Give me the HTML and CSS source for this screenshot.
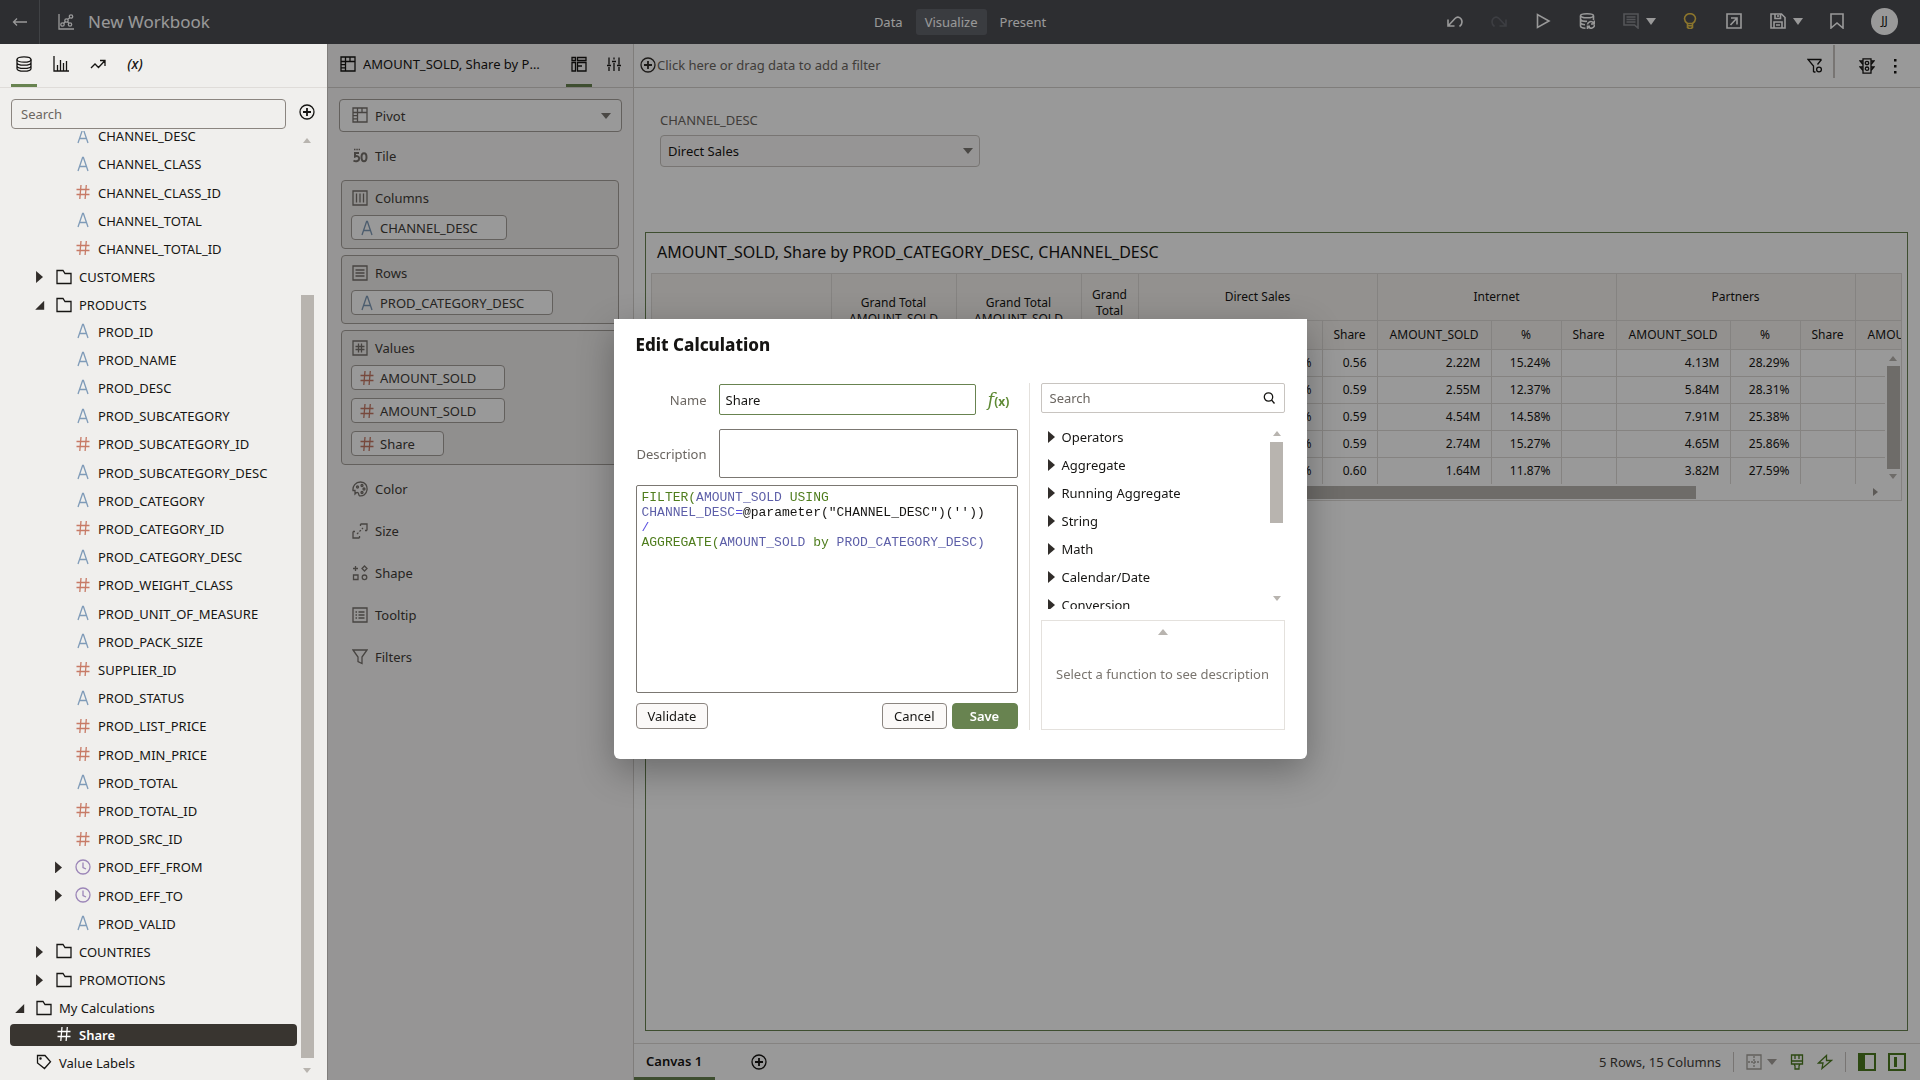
FILE: index.html
```
<!DOCTYPE html>
<html lang="en">

<head>
    <meta charset="UTF-8">
    <meta name="viewport" content="width=device-width, initial-scale=1.0">
    <title>New Workbook</title>
    <link rel="stylesheet" href="styles.css">
</head>

<body>
    <!-- Icon sprite -->
    <svg class="sprite" aria-hidden="true">
        <symbol id="i-back" viewBox="0 0 16 16"><path d="M15 8H1.500M5 4.500L1.500 8L5 11.500"/></symbol>
        <symbol id="i-chart" viewBox="0 0 16 16"><path d="M1 0v15h15"/><circle cx="4.500" cy="10.500" r="1.700"/><circle cx="8.500" cy="6.500" r="1.700"/><circle cx="13" cy="2.500" r="1.700"/><circle cx="12" cy="10.500" r="1.700"/><path d="M5.700 9.300l1.600-1.600M9.700 5.300l2-1.600M9.500 7.800l1.400 1.500"/></symbol>
        <symbol id="i-undo" viewBox="0 0 16 16"><path d="M1 6.500V13h6.500M1.500 12.500L8 5.500C11 2.500 15 5 15 9c0 2-1 3.500-2.500 4.500"/></symbol>
        <symbol id="i-redo" viewBox="0 0 16 16"><path d="M15 6.500V13H8.500M14.500 12.500L8 5.500C5 2.500 1 5 1 9c0 2 1 3.500 2.500 4.500"/></symbol>
        <symbol id="i-play" viewBox="0 0 16 16"><path d="M2.500 1.500v13L14 8z"/></symbol>
        <symbol id="i-dbrefresh" viewBox="0 0 16 16"><ellipse cx="8" cy="2.800" rx="6.500" ry="2"/><path d="M1.500 3v10c0 1 2 2 5 2.200M14.500 3v4M1.500 6.500c1 1.500 4 2 6.500 1.800M1.500 10c.8 1 2.500 1.700 4.500 1.800M8.500 11.500a3.300 3.300 0 0 1 6-1.500M15.500 12a3.300 3.300 0 0 1-6 1.800M15.300 7.500V11H12M8.500 16v-2.800h2.500"/></symbol>
        <symbol id="i-comment" viewBox="0 0 16 16"><path d="M1 1h14v14l-3.500-3H1zM3.500 4h9M3.500 6.500h9M3.500 9h9"/></symbol>
        <symbol id="i-bulb" viewBox="0 0 16 16"><path d="M5.500 10.500C3.500 9 2.500 7.500 2.500 5.700a5.500 5 0 0 1 11 0c0 1.800-1 3.300-3 4.800zM5.500 10.500v4l1.500 1h2l1.500-1v-4M5.500 12.800h5"/></symbol>
        <symbol id="i-export" viewBox="0 0 16 16"><path d="M1 1h14v14H1zM5 5h6v6.500M11 5l-6.500 7"/></symbol>
        <symbol id="i-save" viewBox="0 0 16 16"><path d="M1 1h10.500L15 4.500V15H1zM4 15V9h8v6M5 1v4.500h5.500V1M8 2v2M6 12h4"/></symbol>
        <symbol id="i-bookmark" viewBox="0 0 16 16"><path d="M2 1h12v14l-6-5l-6 5z"/></symbol>
        <symbol id="i-db" viewBox="0 0 16 16"><ellipse cx="8" cy="3.500" rx="7" ry="2.700"/><path d="M1 3.500v9c0 1.700 3 2.700 7 2.700s7-1 7-2.700v-9M1 6.500c0 1.700 3 2.700 7 2.700s7-1 7-2.700M1 9.700c0 1.700 3 2.700 7 2.700s7-1 7-2.700"/></symbol>
        <symbol id="i-bars" viewBox="0 0 16 16"><path d="M1 0v15h15M4.500 15V9M7.500 15V4M10.500 15V7M13.500 15V5"/></symbol>
        <symbol id="i-trend" viewBox="0 0 16 16"><path d="M1 12l4-4 3.500 3.500L15 4.500M10 4.500h5V10"/></symbol>
        <symbol id="i-plus" viewBox="0 0 16 16"><circle cx="8" cy="8" r="7"/><path d="M8 4v8M4 8h8" stroke-width="1.800"/></symbol>
        <symbol id="i-alpha" viewBox="0 0 16 16"><path d="M3 15L7.600 1.500h.8L13 15M4.800 10.500h6.400"/></symbol>
        <symbol id="i-hash" viewBox="0 0 16 16"><path d="M6 1L4.800 15M11.300 1L10.100 15M1.500 5.500h13M1.500 10.500h13"/></symbol>
        <symbol id="i-clock" viewBox="0 0 16 16"><circle cx="8" cy="8" r="7"/><path d="M8 3.500v5l3 1.500"/></symbol>
        <symbol id="i-folder" viewBox="0 0 16 16"><path d="M1 1.500h6l2 3h6v10H1z"/></symbol>
        <symbol id="i-tag" viewBox="0 0 16 16"><path d="M1.500 1.500H9l5.500 6.300L8.500 14.500L1.500 9z"/><circle cx="4.500" cy="4.500" r=".6"/></symbol>
        <symbol id="i-pivot" viewBox="0 0 16 16"><path d="M1 1h14v14H1zM1 5.500h14M5.500 1v14M10 1v4.500M1 8.700h4.500M1 11.800h4.500"/></symbol>
        <symbol id="i-grammar" viewBox="0 0 16 16"><path d="M1 1.500h3.500v3H1zM6.500 1.500H15v3H6.500zM1 6.500h3.500V15H1zM6.500 6.500H15V15H6.500zM6.500 10H11"/></symbol>
        <symbol id="i-sliders" viewBox="0 0 16 16"><path d="M3 1.500v7M3 11v4M8 1.500v2M8 7v8M13 1.500v7M13 11v4M1 9.500h4M6 5.500h4M11 9.500h4"/></symbol>
        <symbol id="i-tile" viewBox="0 0 16 16"><path d="M2 1.500h6" stroke-dasharray="1.500 .8"/><path d="M7 5H3v3.500c2-1 4.200-.2 4.200 2C7.200 13 4 14 1.500 12.500" stroke-width="2"/><ellipse cx="12" cy="9.300" rx="2.500" ry="4" stroke-width="2"/></symbol>
        <symbol id="i-cols" viewBox="0 0 16 16"><path d="M1 1h14v14H1zM4.500 3.500v9M8 3.500v9M11.500 3.500v9"/></symbol>
        <symbol id="i-rows" viewBox="0 0 16 16"><path d="M1 1h14v14H1zM3.500 5h9M3.500 8h9M3.500 11h9"/></symbol>
        <symbol id="i-values" viewBox="0 0 16 16"><path d="M1 1h14v14H1zM6.500 3.500v9M9.500 3.500v9M3.500 6.500h9M3.500 9.500h9"/></symbol>
        <symbol id="i-color" viewBox="0 0 16 16"><path d="M3 13V9.500H1C.5 5 3.500 1 8.500 1S15.500 5 15 9s-4 6.500-7.500 5.800c-1-.3-.5-2-1.500-3S4 12 3 13z"/><circle cx="5.500" cy="6" r="1"/><circle cx="10" cy="4.500" r="1"/><circle cx="12" cy="8" r="1"/><circle cx="10" cy="11.500" r="1"/></symbol>
        <symbol id="i-size" viewBox="0 0 16 16"><path d="M8.500 1H15v6.500M1 8.500V15h6.500M1 8.500h2M7.500 15v-2M8.500 1v2M15 7.500h-2"/><path d="M5 11l6-6" stroke-dasharray="2 1.500"/></symbol>
        <symbol id="i-shape" viewBox="0 0 16 16"><path d="M3.500 1v5M1 3.500h5M12.500 1L15 3.500 12.500 6 10 3.500zM1.500 10h4.500v4.500H1.500z"/><circle cx="12.500" cy="12.300" r="2.300"/></symbol>
        <symbol id="i-tooltip" viewBox="0 0 16 16"><path d="M1 1h14v14H1zM3.500 5H5M6.500 5h6M3.500 8H5M6.500 8h6M3.500 11H5M6.500 11h6"/></symbol>
        <symbol id="i-filter" viewBox="0 0 16 16"><path d="M1 1h14L10 8v6.500l-4-2V8z"/></symbol>
        <symbol id="i-filtergear" viewBox="0 0 16 16"><path d="M14.500 1.500H1L6.500 8v6M14.500 1.500L10.500 6.500M6.500 14h2"/><circle cx="12" cy="11.500" r="2.400"/></symbol>
        <symbol id="i-traffic" viewBox="0 0 16 16"><path d="M4 .800h8v14.400H4zM4 3H1l3 3.500M12 3h3l-3 3.500M4 9H1l3 3.500M12 9h3l-3 3.500"/><circle cx="8" cy="5" r="1.700"/><circle cx="8" cy="10.700" r="1.700"/></symbol>
        <symbol id="i-kebab" viewBox="0 0 16 16"><path d="M7 1h2.500v2.500H7zM7 7h2.500v2.500H7zM7 13h2.500v2.500H7z" fill="currentColor" stroke="none"/></symbol>
        <symbol id="i-grid" viewBox="0 0 16 16"><path d="M1 1h14v14H1z"/><path d="M8 2v12M2 8h12" stroke-dasharray="2 1"/></symbol>
        <symbol id="i-brush" viewBox="0 0 16 16"><path d="M2.500 1h11v9h-11zM2.500 7h11M6 1v4M10 1v4M5 10l1 2v3h4v-3l1-2"/></symbol>
        <symbol id="i-bolt" viewBox="0 0 16 16"><path d="M9.500 1.500L1.500 9h4.500L5 14.500L14.500 6.500H9.500z"/></symbol>
        <symbol id="i-paneleft" viewBox="0 0 18 18"><path d="M1 1h16v16H1z"/><path d="M1 1h6v16H1z" fill="currentColor" stroke="none"/></symbol>
        <symbol id="i-panemid" viewBox="0 0 18 18"><path d="M1 1h16v16H1z"/><path d="M6 4h3v10H6z" fill="currentColor" stroke="none"/></symbol>
        <symbol id="i-search" viewBox="0 0 16 16"><circle cx="7.500" cy="7" r="4.200"/><path d="M10.500 10l3 3.500"/></symbol>
    </svg>

    <div class="app">
        <!-- Header -->
        <header class="header">
            <div class="header-left">
                <button class="back" aria-label="Back"><svg class="icon"><use href="#i-back"/></svg></button>
                <svg class="icon"><use href="#i-chart"/></svg>
                <h1 class="title">New Workbook</h1>
            </div>
            <nav class="modes">
                <a href="#data">Data</a>
                <a href="#visualize" class="active">Visualize</a>
                <a href="#present">Present</a>
            </nav>
            <div class="header-tools">
                <button aria-label="Undo"><svg class="icon"><use href="#i-undo"/></svg></button>
                <button aria-label="Redo" class="faint"><svg class="icon"><use href="#i-redo"/></svg></button>
                <button aria-label="Preview"><svg class="icon"><use href="#i-play"/></svg></button>
                <button aria-label="Refresh data"><svg class="icon"><use href="#i-dbrefresh"/></svg></button>
                <button aria-label="Comments" class="with-caret"><svg class="icon muted"><use href="#i-comment"/></svg><span class="caret"></span></button>
                <button aria-label="Insights" class="yellow"><svg class="icon"><use href="#i-bulb"/></svg></button>
                <button aria-label="Export"><svg class="icon"><use href="#i-export"/></svg></button>
                <button aria-label="Save" class="with-caret"><svg class="icon"><use href="#i-save"/></svg><span class="caret"></span></button>
                <button aria-label="Bookmark"><svg class="icon"><use href="#i-bookmark"/></svg></button>
                <button class="avatar">JJ</button>
            </div>
        </header>

        <div class="workspace">
            <!-- Data panel -->
            <aside class="data-panel">
                <div class="panel-tabs">
                    <button class="tab active" aria-label="Data"><svg class="icon"><use href="#i-db"/></svg></button>
                    <button class="tab" aria-label="Visualizations"><svg class="icon"><use href="#i-bars"/></svg></button>
                    <button class="tab" aria-label="Analytics"><svg class="icon"><use href="#i-trend"/></svg></button>
                    <button class="tab param" aria-label="Parameters">(x)</button>
                </div>
                <div class="data-search">
                    <input type="text" placeholder="Search" aria-label="Search data">
                    <button aria-label="Add"><svg class="icon"><use href="#i-plus"/></svg></button>
                </div>
                <div class="tree-area">
                    <ul class="tree">
                        <li class="l2 text"><svg class="icon"><use href="#i-alpha"/></svg>CHANNEL_DESC</li>
                        <li class="l2 text"><svg class="icon"><use href="#i-alpha"/></svg>CHANNEL_CLASS</li>
                        <li class="l2 num"><svg class="icon"><use href="#i-hash"/></svg>CHANNEL_CLASS_ID</li>
                        <li class="l2 text"><svg class="icon"><use href="#i-alpha"/></svg>CHANNEL_TOTAL</li>
                        <li class="l2 num"><svg class="icon"><use href="#i-hash"/></svg>CHANNEL_TOTAL_ID</li>
                        <li class="l1 closed"><svg class="icon"><use href="#i-folder"/></svg>CUSTOMERS</li>
                        <li class="l1 open"><svg class="icon"><use href="#i-folder"/></svg>PRODUCTS</li>
                        <li class="l2 text first"><svg class="icon"><use href="#i-alpha"/></svg>PROD_ID</li>
                        <li class="l2 text"><svg class="icon"><use href="#i-alpha"/></svg>PROD_NAME</li>
                        <li class="l2 text"><svg class="icon"><use href="#i-alpha"/></svg>PROD_DESC</li>
                        <li class="l2 text"><svg class="icon"><use href="#i-alpha"/></svg>PROD_SUBCATEGORY</li>
                        <li class="l2 num"><svg class="icon"><use href="#i-hash"/></svg>PROD_SUBCATEGORY_ID</li>
                        <li class="l2 text"><svg class="icon"><use href="#i-alpha"/></svg>PROD_SUBCATEGORY_DESC</li>
                        <li class="l2 text"><svg class="icon"><use href="#i-alpha"/></svg>PROD_CATEGORY</li>
                        <li class="l2 num"><svg class="icon"><use href="#i-hash"/></svg>PROD_CATEGORY_ID</li>
                        <li class="l2 text"><svg class="icon"><use href="#i-alpha"/></svg>PROD_CATEGORY_DESC</li>
                        <li class="l2 num"><svg class="icon"><use href="#i-hash"/></svg>PROD_WEIGHT_CLASS</li>
                        <li class="l2 text"><svg class="icon"><use href="#i-alpha"/></svg>PROD_UNIT_OF_MEASURE</li>
                        <li class="l2 text"><svg class="icon"><use href="#i-alpha"/></svg>PROD_PACK_SIZE</li>
                        <li class="l2 num"><svg class="icon"><use href="#i-hash"/></svg>SUPPLIER_ID</li>
                        <li class="l2 text"><svg class="icon"><use href="#i-alpha"/></svg>PROD_STATUS</li>
                        <li class="l2 num"><svg class="icon"><use href="#i-hash"/></svg>PROD_LIST_PRICE</li>
                        <li class="l2 num"><svg class="icon"><use href="#i-hash"/></svg>PROD_MIN_PRICE</li>
                        <li class="l2 text"><svg class="icon"><use href="#i-alpha"/></svg>PROD_TOTAL</li>
                        <li class="l2 num"><svg class="icon"><use href="#i-hash"/></svg>PROD_TOTAL_ID</li>
                        <li class="l2 num"><svg class="icon"><use href="#i-hash"/></svg>PROD_SRC_ID</li>
                        <li class="l2 date closed"><svg class="icon"><use href="#i-clock"/></svg>PROD_EFF_FROM</li>
                        <li class="l2 date closed"><svg class="icon"><use href="#i-clock"/></svg>PROD_EFF_TO</li>
                        <li class="l2 text"><svg class="icon"><use href="#i-alpha"/></svg>PROD_VALID</li>
                        <li class="l1 closed"><svg class="icon"><use href="#i-folder"/></svg>COUNTRIES</li>
                        <li class="l1 closed"><svg class="icon"><use href="#i-folder"/></svg>PROMOTIONS</li>
                        <li class="l0 open"><svg class="icon"><use href="#i-folder"/></svg>My Calculations</li>
                        <li class="l1 selected first"><svg class="icon"><use href="#i-hash"/></svg>Share</li>
                        <li class="l0"><svg class="icon"><use href="#i-tag"/></svg>Value Labels</li>
                    </ul>
                    <div class="scrollbar tree-scroll">
                        <span class="arrow-up"></span>
                        <span class="thumb"></span>
                        <span class="arrow-down"></span>
                    </div>
                </div>
            </aside>

            <!-- Grammar panel -->
            <section class="grammar-panel">
                <div class="grammar-head">
                    <svg class="icon"><use href="#i-pivot"/></svg>
                    <h2>AMOUNT_SOLD, Share by PROD_CATEGORY_DESC</h2>
                    <button class="tab active" aria-label="Grammar"><svg class="icon"><use href="#i-grammar"/></svg></button>
                    <button class="tab" aria-label="Properties"><svg class="icon"><use href="#i-sliders"/></svg></button>
                </div>
                <div class="grammar-body">
                    <div class="viz-type">
                        <svg class="icon"><use href="#i-pivot"/></svg>
                        <select aria-label="Visualization type"><option>Pivot</option></select>
                        <span class="caret"></span>
                    </div>
                    <div class="drop-row"><svg class="icon"><use href="#i-tile"/></svg>Tile</div>
                    <div class="zones">
                        <div class="zone">
                            <h3><svg class="icon"><use href="#i-cols"/></svg>Columns</h3>
                            <button class="chip text"><svg class="icon"><use href="#i-alpha"/></svg><span>CHANNEL_DESC</span></button>
                        </div>
                        <div class="zone">
                            <h3><svg class="icon"><use href="#i-rows"/></svg>Rows</h3>
                            <button class="chip text"><svg class="icon"><use href="#i-alpha"/></svg><span>PROD_CATEGORY_DESC</span></button>
                        </div>
                        <div class="zone">
                            <h3><svg class="icon"><use href="#i-values"/></svg>Values</h3>
                            <button class="chip num"><svg class="icon"><use href="#i-hash"/></svg><span>AMOUNT_SOLD</span></button>
                            <button class="chip num"><svg class="icon"><use href="#i-hash"/></svg><span>AMOUNT_SOLD</span></button>
                            <button class="chip num"><svg class="icon"><use href="#i-hash"/></svg><span>Share</span></button>
                        </div>
                    </div>
                    <div class="drop-row"><svg class="icon"><use href="#i-color"/></svg>Color</div>
                    <div class="drop-row"><svg class="icon"><use href="#i-size"/></svg>Size</div>
                    <div class="drop-row"><svg class="icon"><use href="#i-shape"/></svg>Shape</div>
                    <div class="drop-row"><svg class="icon"><use href="#i-tooltip"/></svg>Tooltip</div>
                    <div class="drop-row"><svg class="icon"><use href="#i-filter"/></svg>Filters</div>
                </div>
            </section>

            <!-- Canvas -->
            <main class="canvas">
                <div class="filter-bar">
                    <button class="add-filter"><svg class="icon"><use href="#i-plus"/></svg>Click here or drag data to add a filter</button>
                    <div class="filter-tools">
                        <button aria-label="Filter options"><svg class="icon"><use href="#i-filtergear"/></svg></button>
                        <span class="divider"></span>
                        <button aria-label="Auto apply"><svg class="icon"><use href="#i-traffic"/></svg></button>
                        <button aria-label="More"><svg class="icon"><use href="#i-kebab"/></svg></button>
                    </div>
                </div>

                <div class="dashboard-filter">
                    <label for="channel">CHANNEL_DESC</label>
                    <div class="select-wrap">
                        <select id="channel"><option>Direct Sales</option></select>
                        <span class="caret"></span>
                    </div>
                </div>

                <section class="viz">
                    <h2>AMOUNT_SOLD, Share by PROD_CATEGORY_DESC, CHANNEL_DESC</h2>
                    <div class="pivot">
                        <div class="pivot-view">
                            <table>
                                <colgroup>
                                    <col class="c-label"><col class="c-total"><col class="c-total"><col class="c-gshare">
                                    <col class="c-amount"><col class="c-pct"><col class="c-share">
                                    <col class="c-amount"><col class="c-pct"><col class="c-share">
                                    <col class="c-amount"><col class="c-pct"><col class="c-share">
                                    <col class="c-amount">
                                </colgroup>
                                <thead>
                                    <tr class="groups">
                                        <td rowspan="2"></td>
                                        <th rowspan="2">Grand Total AMOUNT_SOLD</th>
                                        <th rowspan="2">Grand Total AMOUNT_SOLD</th>
                                        <th rowspan="2">Grand Total Share</th>
                                        <th colspan="3">Direct Sales</th>
                                        <th colspan="3">Internet</th>
                                        <th colspan="3">Partners</th>
                                        <th></th>
                                    </tr>
                                    <tr>
                                        <th>AMOUNT_SOLD</th><th>%</th><th>Share</th>
                                        <th>AMOUNT_SOLD</th><th>%</th><th>Share</th>
                                        <th>AMOUNT_SOLD</th><th>%</th><th>Share</th>
                                        <th>AMOUNT_SOLD</th>
                                    </tr>
                                </thead>
                                <tbody>
                                    <tr><td></td><td></td><td></td><td></td><td></td><td>56.47%</td><td>0.56</td><td>2.22M</td><td>15.24%</td><td></td><td>4.13M</td><td>28.29%</td><td></td><td></td></tr>
                                    <tr><td></td><td></td><td></td><td></td><td></td><td>59.32%</td><td>0.59</td><td>2.55M</td><td>12.37%</td><td></td><td>5.84M</td><td>28.31%</td><td></td><td></td></tr>
                                    <tr><td></td><td></td><td></td><td></td><td></td><td>59.04%</td><td>0.59</td><td>4.54M</td><td>14.58%</td><td></td><td>7.91M</td><td>25.38%</td><td></td><td></td></tr>
                                    <tr><td></td><td></td><td></td><td></td><td></td><td>58.87%</td><td>0.59</td><td>2.74M</td><td>15.27%</td><td></td><td>4.65M</td><td>25.86%</td><td></td><td></td></tr>
                                    <tr><td></td><td></td><td></td><td></td><td></td><td>60.05%</td><td>0.60</td><td>1.64M</td><td>11.87%</td><td></td><td>3.82M</td><td>27.59%</td><td></td><td></td></tr>
                                </tbody>
                            </table>
                            <div class="scrollbar pivot-scroll">
                                <span class="arrow-up"></span>
                                <span class="thumb"></span>
                                <span class="arrow-down"></span>
                            </div>
                        </div>
                        <div class="h-scroll">
                            <span class="thumb"></span>
                            <span class="arrow-right"></span>
                        </div>
                    </div>
                </section>

                <footer class="canvas-bar">
                    <button class="canvas-tab">Canvas 1</button>
                    <button class="add-canvas" aria-label="Add canvas"><svg class="icon"><use href="#i-plus"/></svg></button>
                    <div class="status">
                        <span>5 Rows, 15 Columns</span>
                        <span class="bar"></span>
                        <button class="grid-btn" aria-label="Grid"><svg class="icon"><use href="#i-grid"/></svg><span class="caret"></span></button>
                        <button aria-label="Brushing"><svg class="icon"><use href="#i-brush"/></svg></button>
                        <button aria-label="Auto insights"><svg class="icon"><use href="#i-bolt"/></svg></button>
                        <span class="bar"></span>
                        <button aria-label="Data panel"><svg class="icon big"><use href="#i-paneleft"/></svg></button>
                        <button aria-label="Grammar panel"><svg class="icon big"><use href="#i-panemid"/></svg></button>
                    </div>
                </footer>
            </main>
        </div>
    </div>

    <!-- Edit Calculation dialog -->
    <div class="backdrop"></div>
    <div class="dialog-layer">
        <form class="dialog" role="dialog" aria-labelledby="dialogTitle">
            <h2 id="dialogTitle">Edit Calculation</h2>
            <div class="dialog-body">
                <div class="calc">
                    <div class="field">
                        <label for="calcName">Name</label>
                        <input id="calcName" type="text" value="Share">
                        <button type="button" class="fx" aria-label="Functions"><i>f</i><b>(x)</b></button>
                    </div>
                    <div class="field">
                        <label for="calcDesc">Description</label>
                        <textarea id="calcDesc"></textarea>
                    </div>
                    <div class="editor" role="textbox" aria-multiline="true" aria-label="Expression" contenteditable="true" spellcheck="false"><span class="kw">FILTER(</span><span class="col">AMOUNT_SOLD</span> <span class="kw">USING</span>
<span class="col">CHANNEL_DESC</span><span class="op">=</span>@parameter("CHANNEL_DESC")(''))
<span class="op">/</span>
<span class="kw">AGGREGATE(</span><span class="col">AMOUNT_SOLD</span> <span class="kw">by</span> <span class="col">PROD_CATEGORY_DESC)</span></div>
                    <div class="actions">
                        <button type="button">Validate</button>
                        <button type="button" class="push">Cancel</button>
                        <button type="button" class="primary">Save</button>
                    </div>
                </div>
                <div class="functions">
                    <div class="fn-search">
                        <input type="text" placeholder="Search" aria-label="Search functions">
                        <svg class="icon"><use href="#i-search"/></svg>
                    </div>
                    <div class="fn-area">
                        <ul class="fn-list">
                            <li>Operators</li>
                            <li>Aggregate</li>
                            <li>Running Aggregate</li>
                            <li>String</li>
                            <li>Math</li>
                            <li>Calendar/Date</li>
                            <li>Conversion</li>
                        </ul>
                        <div class="scrollbar fn-scroll">
                            <span class="arrow-up"></span>
                            <span class="thumb"></span>
                            <span class="arrow-down"></span>
                        </div>
                    </div>
                    <div class="fn-desc">
                        <span class="arrow-up"></span>
                        <p>Select a function to see description</p>
                    </div>
                </div>
            </div>
        </form>
    </div>
</body>

</html>
```
FILE: styles.css
```
/* General */
* {
    box-sizing: border-box;
}

body {
    margin: 0;
    font-family: 'Noto Sans', 'Open Sans', sans-serif;
    font-size: 13px;
    line-height: 18px;
    color: #161513;
    overflow: hidden;
}

h1, h2, h3, ul, p {
    margin: 0;
    padding: 0;
    font-weight: 400;
}

ul {
    list-style: none;
}

button, input, select, textarea {
    font: inherit;
    color: inherit;
    margin: 0;
}

button {
    background: none;
    border: none;
    padding: 0;
    cursor: pointer;
}

select {
    appearance: none;
    background: none;
    border: none;
    outline: none;
    padding: 0;
    width: 100%;
}

.sprite {
    display: none;
}

.icon {
    width: 16px;
    height: 16px;
    flex: none;
    display: block;
    fill: none;
    stroke: currentColor;
    stroke-width: 1.3;
}

.icon.big {
    width: 18px;
    height: 18px;
    stroke-width: 2;
}

.caret {
    flex: none;
    border: 5px solid transparent;
    border-top: 6px solid currentColor;
    border-bottom: none;
}

.app {
    display: flex;
    flex-direction: column;
    height: 100vh;
}

/* Header */
.header {
    display: grid;
    grid-template-columns: 1fr auto 1fr;
    align-items: center;
    height: 44px;
    flex: none;
    background: #4b4d53;
    color: #fff;
}

.header-left {
    display: flex;
    align-items: center;
    height: 44px;
}

.back {
    width: 40px;
    height: 44px;
    padding: 0 12px;
    margin-right: 18px;
    border-right: 1px solid #6c6e74;
}

.title {
    margin-left: 14px;
    font-size: 17px;
    line-height: 24px;
}

.modes {
    display: flex;
    gap: 4px;
}

.modes a {
    padding: 4px 9px;
    border-radius: 3px;
    color: #fff;
    text-decoration: none;
}

.modes .active {
    background: #62646b;
}

.header-tools {
    display: flex;
    justify-content: flex-end;
    align-items: center;
    gap: 28px;
    padding: 0 22px 2px 0;
}

.header-tools .icon {
    stroke-width: 1.6;
}

.header-tools .caret {
    border-top-width: 7px;
}

.with-caret {
    display: flex;
    align-items: center;
    gap: 7px;
    margin-right: -2px;
}

.faint {
    color: #66686f;
}

.muted {
    color: #8d8e93;
}

.yellow {
    color: #e8c34a;
}

.avatar {
    width: 27px;
    height: 27px;
    margin-left: -2px;
    border-radius: 50%;
    background: #fff;
    color: #161513;
    font-size: 12px;
}

/* Columns of the page */
.workspace {
    display: flex;
    flex: 1;
    min-height: 0;
}

.tab {
    display: flex;
    align-items: center;
    justify-content: center;
    width: 26px;
    height: 43px;
    border-bottom: 3px solid transparent;
    padding-bottom: 1px;
}

.tab.active {
    border-bottom-color: #688350;
}

/* Data panel */
.data-panel {
    position: relative;
    z-index: 2; /* stays above the dialog backdrop */
    display: flex;
    flex-direction: column;
    width: 327px;
    flex: none;
    background: #f0efed;
}

.panel-tabs {
    display: flex;
    gap: 11px;
    height: 44px;
    padding-left: 11px;
    border-bottom: 1px solid #dfdcd9;
}

.param {
    font-size: 14px;
    font-style: italic;
    font-weight: 500;
}

.data-search {
    display: flex;
    align-items: center;
    gap: 13px;
    padding: 11px 12px 0 11px;
}

.data-search input {
    width: 275px;
    height: 30px;
    padding: 0 9px;
    border: 1px solid #8b8580;
    border-radius: 4px;
    background: transparent;
}

.data-search button {
    margin-bottom: 4px;
}

input::placeholder {
    color: #6b6661;
    opacity: 1;
}

.tree-area {
    display: flex;
    flex: 1;
    min-height: 0;
    margin-top: 2px;
    padding-bottom: 3px;
    overflow: hidden;
}

.tree {
    display: flex;
    flex-direction: column;
    flex: 1;
    margin-top: -9px;
}

.tree li {
    display: flex;
    align-items: center;
    gap: 7px;
    flex: 1 1 28px;
    min-height: 22px;
}

.tree li::before {
    content: '';
    width: 12px;
    margin-right: 3px;
}

.tree li .icon {
    margin-bottom: 1px;
}

.tree .l1 {
    padding-left: 34px;
}

.tree .l0 {
    padding-left: 14px;
}

.tree .l2 {
    padding-left: 53px;
}

.tree .closed::before {
    height: 12px;
    background: #312d2a;
    clip-path: polygon(17% 0, 75% 50%, 17% 100%);
}

.tree .open::before {
    height: 9px;
    background: #312d2a;
    clip-path: polygon(10% 100%, 85% 0, 85% 100%);
}

.tree .first {
    margin-top: -2px;
}

.tree .selected {
    position: relative;
    z-index: 0;
    color: #fff;
    font-weight: 600;
}

/* dark pill behind the selected row */
.tree .selected::after {
    content: '';
    position: absolute;
    inset: 3px 3px 3px 10px;
    z-index: -1;
    border-radius: 4px;
    background: #393530;
}

.text .icon {
    color: #7f9bb8;
}

.num .icon {
    color: #c77a66;
}

.date .icon {
    color: #9c86b8;
}

/* Scrollbars */
.scrollbar {
    display: flex;
    flex-direction: column;
    align-items: center;
    flex: none;
    width: 14px;
    color: #b8b4af;
}

.scrollbar .thumb {
    width: 13px;
    background: currentColor;
}

.arrow-up, .arrow-down {
    flex: none;
    border: 4px solid transparent;
}

.arrow-up {
    border-top: none;
    border-bottom: 5px solid #b8b4af;
}

.arrow-down {
    border-bottom: none;
    border-top: 5px solid #b8b4af;
}

.tree-scroll {
    margin-right: 13px;
    padding: 7px 0 4px;
}

.tree-scroll .thumb {
    flex: 1;
    margin: 152px 0 10px;
}

/* Grammar panel */
.grammar-panel {
    width: 307px;
    flex: none;
    border-left: 1px solid #d4d1ce;
    border-right: 1px solid #d4d1ce;
    background: #fbf9f8;
}

.grammar-head {
    display: flex;
    align-items: center;
    height: 44px;
    padding: 0 6px 0 12px;
    border-bottom: 1px solid #d4d1ce;
}

.grammar-head > .icon,
.grammar-head h2 {
    margin-bottom: 3px;
}

.grammar-head h2 {
    flex: 1;
    margin-left: 7px;
    margin-right: 26px;
    font-size: 13px;
    overflow: hidden;
    white-space: nowrap;
    text-overflow: ellipsis;
}

.grammar-head .tab + .tab {
    margin-left: 9px;
}

.grammar-body {
    padding: 11px 11px 0;
    color: #413c38;
}

.grammar-body .icon {
    color: #77726d;
}

.viz-type {
    display: flex;
    align-items: center;
    gap: 7px;
    height: 33px;
    padding: 0 10px 0 12px;
    margin-bottom: 3px;
    border: 1px solid #a5a09b;
    border-radius: 4px;
    background: #fff;
}

.viz-type .icon {
    margin-bottom: 2px;
}

.viz-type .caret,
.select-wrap .caret {
    color: #7c7874;
}

.drop-row {
    display: flex;
    align-items: center;
    gap: 7px;
    height: 42px;
    padding-left: 13px;
}

.zones {
    display: flex;
    flex-direction: column;
    gap: 6px;
    margin: 3px 3px 3px 2px;
}

.zone {
    padding: 0 9px 8px;
    border: 1px solid #a5a09b;
    border-radius: 4px;
    background: #f1efed;
}

.zone h3 {
    display: flex;
    align-items: center;
    gap: 7px;
    height: 34px;
    padding-left: 1px;
    font-size: 13px;
}

.chip {
    display: flex;
    align-items: center;
    gap: 5px;
    height: 25px;
    padding: 0 28px 0 7px;
    border: 1px solid #a5a09b;
    border-radius: 4px;
    background: #fff;
}

.chip + .chip {
    margin-top: 8px;
}

.chip.text .icon {
    color: #7f9bb8;
}

.chip.num .icon {
    color: #c77a66;
}

/* Canvas */
.canvas {
    display: flex;
    flex-direction: column;
    flex: 1;
    min-width: 0;
    background: #fff;
}

.filter-bar {
    display: flex;
    align-items: center;
    justify-content: space-between;
    height: 44px;
    flex: none;
    padding: 0 17px 0 6px;
    border-bottom: 1px solid #d4d1ce;
}

.add-filter {
    display: flex;
    align-items: center;
    gap: 1px;
    margin-bottom: 2px;
    color: #6b6661;
}

.add-filter .icon {
    color: #312d2a;
}

.filter-tools {
    display: flex;
    align-items: center;
}

.filter-tools .divider {
    width: 2px;
    height: 33px;
    margin: 0 24px 8px 10px;
    background: #c8c4c0;
}

.filter-tools button + button {
    margin-left: 12px;
}

.dashboard-filter {
    flex: none;
    width: 346px;
    height: 144px;
    padding: 23px 0 0 26px;
}

.dashboard-filter label {
    display: block;
    margin-bottom: 6px;
    color: #6b6661;
}

.select-wrap {
    display: flex;
    align-items: center;
    height: 32px;
    padding: 0 6px 0 7px;
    border: 1px solid #c8c4c0;
    border-radius: 4px;
    background: #fbf9f8;
}

.viz {
    flex: 1;
    min-height: 0;
    margin: 0 12px 12px 11px;
    padding: 8px 5px;
    border: 1px solid #688350;
}

.viz h2 {
    margin: 0 0 10px 6px;
    font-size: 16px;
    line-height: 22px;
}

.pivot {
    border: 1px solid #dedbd8;
}

.pivot-view {
    position: relative;
    overflow: hidden;
}

.pivot table {
    table-layout: fixed;
    width: 1293px;
    border-collapse: collapse;
    font-size: 12px;
    line-height: 16px;
}

.c-label { width: 179px; }
.c-total { width: 125px; }
.c-gshare { width: 57px; }
.c-amount { width: 114px; }
.c-pct { width: 70px; }
.c-share { width: 55px; }

.pivot th,
.pivot td {
    height: 27px;
    padding: 0 10px;
    border: 1px solid #dedbd8;
    font-weight: 400;
    text-align: right;
}

.pivot tr > :first-child {
    border-left: none;
}

.pivot thead th,
.pivot thead td {
    height: 29px;
    padding: 0 8px;
    background: #f5f2ef;
    text-align: center;
}

.pivot thead .groups > * {
    height: 46px;
    border-top: none;
}

.pivot tbody tr:last-child td {
    border-bottom: none;
}

.pivot-scroll {
    position: absolute;
    right: 0;
    top: 76px;
    bottom: 0;
    width: 16px;
    padding: 6px 0 5px;
    background: #fff;
    color: #b8b4af;
}

.pivot-scroll .thumb {
    flex: 1;
    margin: 5px 0;
}

.h-scroll {
    display: flex;
    align-items: center;
    justify-content: space-between;
    height: 16px;
    padding: 0 23px 0 318px;
}

.h-scroll .thumb {
    width: 80%;
    height: 13px;
    background: #b8b4af;
}

.arrow-right {
    border: 4px solid transparent;
    border-left: 5px solid #9c9792;
    border-right: none;
}

.canvas-bar {
    display: flex;
    height: 37px;
    flex: none;
    border-top: 1px solid #dedbd8;
}

.canvas-tab {
    padding: 0 13px 0 12px;
    border-bottom: 3px solid #688350;
    font-weight: 600;
}

.add-canvas {
    margin-left: 36px;
}

.status {
    display: flex;
    align-items: center;
    gap: 12px;
    margin-left: auto;
    padding-right: 14px;
    color: #4b7a1f;
}

.status > span:first-child {
    color: #413c38;
}

.status .bar {
    width: 1px;
    height: 20px;
    background: #c8c4c0;
}

.grid-btn {
    display: flex;
    align-items: center;
    gap: 5px;
    color: #a5a09b;
}

/* Dialog */
.backdrop {
    position: fixed;
    inset: 0;
    z-index: 1;
    background: rgba(0, 0, 0, 0.4);
}

.dialog-layer {
    position: fixed;
    inset: 0;
    z-index: 3;
    display: flex;
    align-items: center;
    justify-content: center;
    pointer-events: none;
}

.dialog {
    width: 693px;
    margin-bottom: 2px;
    padding: 14px 22px 29px;
    border-radius: 0 0 6px 6px;
    background: #fff;
    box-shadow: 0 12px 36px rgba(0, 0, 0, 0.3);
    pointer-events: auto;
}

.dialog h2 {
    margin-bottom: 26px;
    font-size: 17px;
    line-height: 24px;
    font-weight: 800;
}

.dialog-body {
    display: flex;
    gap: 11px;
}

.calc {
    display: flex;
    flex-direction: column;
    flex: 1;
    gap: 7px;
    padding-top: 1px;
}

.field {
    display: flex;
    align-items: center;
    gap: 12px;
}

.field:first-child {
    margin-bottom: 7px;
}

.field label {
    width: 71px;
    text-align: right;
    color: #6b6661;
}

.field input,
.field textarea {
    flex: 1;
    min-width: 0;
    padding: 0 6px;
    border: 1px solid #7b7772;
    border-radius: 2px;
    background: #fff;
    resize: none;
}

.field input {
    height: 31px;
    border-color: #688350;
}

.field textarea {
    height: 49px;
}

.fx {
    width: 30px;
    text-align: left;
    color: #5f8a35;
}

.fx i {
    font: italic 400 18px 'DejaVu Serif', serif;
}

.fx b {
    font-size: 12px;
}

.editor {
    height: 208px;
    padding: 4px 5px;
    border: 1px solid #7b7772;
    border-radius: 2px;
    font-family: 'Liberation Mono', monospace;
    font-size: 13px;
    line-height: 15px;
    white-space: pre;
    color: #161513;
}

.kw {
    color: #4f7d1d;
}

.col {
    color: #5d5fa8;
}

.op {
    color: #5a4fe0;
}

.actions {
    display: flex;
    gap: 5px;
    padding-top: 3px;
}

.actions button {
    height: 26px;
    padding: 0 11px;
    border: 1px solid #8b8580;
    border-radius: 4px;
    background: #fbf9f8;
}

.actions .push {
    margin-left: auto;
}

.actions .primary {
    width: 66px;
    border-color: #688350;
    background: #688350;
    color: #fff;
    font-weight: 600;
}

.functions {
    display: flex;
    flex-direction: column;
    width: 256px;
    padding-left: 11px;
    border-left: 1px solid #e4e1dd;
}

.fn-search {
    display: flex;
    align-items: center;
    height: 30px;
    padding: 0 7px 0 8px;
    border: 1px solid #c8c4c0;
    border-radius: 2px;
}

.fn-search input {
    flex: 1;
    min-width: 0;
    padding: 0;
    border: none;
    outline: none;
    background: none;
}

.fn-area {
    display: flex;
    height: 186px;
    margin: 10px 0 11px;
    overflow: hidden;
}

.fn-list {
    flex: 1;
}

.fn-list li {
    display: flex;
    align-items: center;
    height: 28px;
}

.fn-list li::before {
    content: '';
    margin: 0 7px;
    border: 6px solid transparent;
    border-left: 7px solid #312d2a;
    border-right: none;
}

.fn-scroll {
    margin-right: 1px;
    padding: 8px 0;
}

.fn-scroll .thumb {
    height: 81px;
    margin: 6px 0 auto;
}

.fn-desc {
    display: flex;
    flex-direction: column;
    align-items: center;
    height: 110px;
    padding-top: 8px;
    border: 1px solid #e4e1dd;
    color: #7a756f;
}

.fn-desc .arrow-up {
    border-width: 0 5px 6px;
}

.fn-desc p {
    margin-top: 30px;
}
```
